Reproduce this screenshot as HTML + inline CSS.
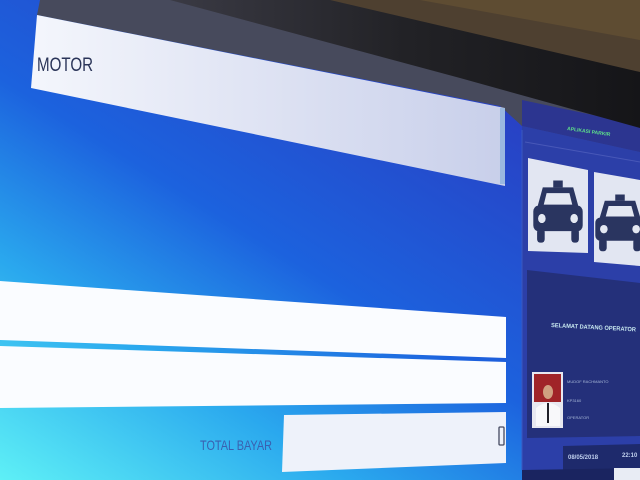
<!DOCTYPE html>
<html><head><meta charset="utf-8"><style>
html,body{margin:0;padding:0;width:640px;height:480px;overflow:hidden;background:#2a50d0}
svg{display:block}
text{font-family:"Liberation Sans",sans-serif}
</style></head><body>
<svg width="640" height="480" viewBox="0 0 640 480" xmlns="http://www.w3.org/2000/svg">
<defs>
<linearGradient id="bg" x1="0" y1="1" x2="0.75" y2="0.1">
<stop offset="0" stop-color="#5ef0f6"/>
<stop offset="0.3" stop-color="#2aa8ee"/>
<stop offset="0.55" stop-color="#1c62de"/>
<stop offset="1" stop-color="#2a3cc0"/>
</linearGradient>
<linearGradient id="wb" x1="0" y1="0" x2="1" y2="0">
<stop offset="0" stop-color="#f4f6fc"/>
<stop offset="1" stop-color="#c8cfea"/>
</linearGradient>
<linearGradient id="bez" x1="0" y1="0" x2="1" y2="0">
<stop offset="0" stop-color="#3a3a44"/>
<stop offset="0.5" stop-color="#222226"/>
<stop offset="1" stop-color="#151518"/>
</linearGradient>
<g id="car">
<rect x="-5" y="-30" width="10" height="6" fill="#2a3560"/>
<path d="M-16,-24 H16 L22,-6 H-22 Z" fill="#2a3560"/>
<path d="M-12,-19 H12 L15,-9 H-15 Z" fill="#e4e8f2"/>
<rect x="-26" y="-8" width="52" height="22" rx="5" fill="#2a3560"/>
<circle cx="-17" cy="3" r="4" fill="#e4e8f2"/>
<circle cx="17" cy="3" r="4" fill="#e4e8f2"/>
<rect x="-22" y="12" width="8" height="12" rx="3" fill="#2a3560"/>
<rect x="14" y="12" width="8" height="12" rx="3" fill="#2a3560"/>
</g>
</defs>
<rect width="640" height="480" fill="url(#bg)"/>
<!-- gray top region -->
<polygon points="40,0 640,0 640,152 522,126 500,106 37,15" fill="#474a5c"/>
<polygon points="522,100 640,125 640,152 522,126" fill="#2c3590"/>
<!-- bezel -->
<polygon points="170,0 640,0 640,128 460,78" fill="url(#bez)"/>
<polygon points="330,0 640,0 640,72" fill="#4e4030"/>
<polygon points="420,0 640,0 640,40" fill="#5e4c32"/>
<!-- right panel -->
<polygon points="522,126 640,152 640,480 522,480" fill="#2c3fa8"/>
<text x="567" y="130" font-size="5" fill="#5ee08a" font-weight="bold" transform="rotate(8 567 130)">APLIKASI PARKIR</text>
<line x1="525" y1="142" x2="640" y2="162" stroke="#4858b8" stroke-width="1"/>
<polygon points="528,158 588,170 588,253 528,251" fill="#e2e6f2"/>
<polygon points="594,172 640,180 640,266 594,262" fill="#e2e6f2"/>
<use href="#car" transform="translate(558,215) scale(0.95,1.15)"/>
<use href="#car" transform="translate(620,226) scale(0.95,1.05)"/>
<!-- operator panel -->
<polygon points="527,270 640,283 640,436 527,438" fill="#24307a"/>
<text x="551" y="327" font-size="6" fill="#c8e8f0" font-weight="bold" transform="rotate(3 551 327)" textLength="85" lengthAdjust="spacingAndGlyphs">SELAMAT DATANG OPERATOR</text>
<rect x="532" y="372" width="31" height="56" fill="#e8e8f0"/>
<rect x="534" y="374" width="27" height="28" fill="#a02428"/>
<ellipse cx="548" cy="392" rx="5" ry="7" fill="#d0a080"/>
<path d="M536,426 L536,408 Q548,398 560,408 L560,426 Z" fill="#f8f8fa"/>
<rect x="547" y="403" width="2" height="20" fill="#202028"/>
<text x="567" y="383" font-size="4" fill="#a8b8d8">MUDOF RACHMANTO</text>
<text x="567" y="402" font-size="4" fill="#a8b8d8">KP3160</text>
<text x="567" y="419" font-size="4" fill="#a8b8d8">OPERATOR</text>
<polygon points="563,446 640,444 640,470 563,472" fill="#1e2a6c"/>
<text x="568" y="459" font-size="6" fill="#c0d0ee" font-weight="bold">08/05/2018</text>
<text x="622" y="457" font-size="6" fill="#c0d0ee" font-weight="bold">22:10</text>
<polygon points="522,470 640,468 640,480 522,480" fill="#1a2460"/>
<rect x="614" y="468" width="26" height="12" fill="#e8ecf4"/>
<line x1="522" y1="130" x2="522" y2="470" stroke="#3a58c0" stroke-width="1"/>
<!-- MOTOR box -->
<polygon points="37,15 505,108 505,186 31,88" fill="url(#wb)"/>
<rect x="500" y="108" width="5" height="76" fill="#9ab8e0"/>
<text x="37" y="71" font-size="19" fill="#2a3458" textLength="56" lengthAdjust="spacingAndGlyphs">MOTOR</text>
<!-- fields -->
<polygon points="0,281 506,317 506,358 0,340" fill="#fafcff"/>
<polygon points="0,346 506,362 506,403 0,408" fill="#fafcff"/>
<polygon points="284,415 506,412 506,463 282,472" fill="#eef2fa"/>
<rect x="499" y="427" width="5" height="18" rx="1" fill="none" stroke="#444a60" stroke-width="1.3"/>
<text x="200" y="450" font-size="14" fill="#3a60b0" textLength="72" lengthAdjust="spacingAndGlyphs">TOTAL BAYAR</text>
</svg>
</body></html>
